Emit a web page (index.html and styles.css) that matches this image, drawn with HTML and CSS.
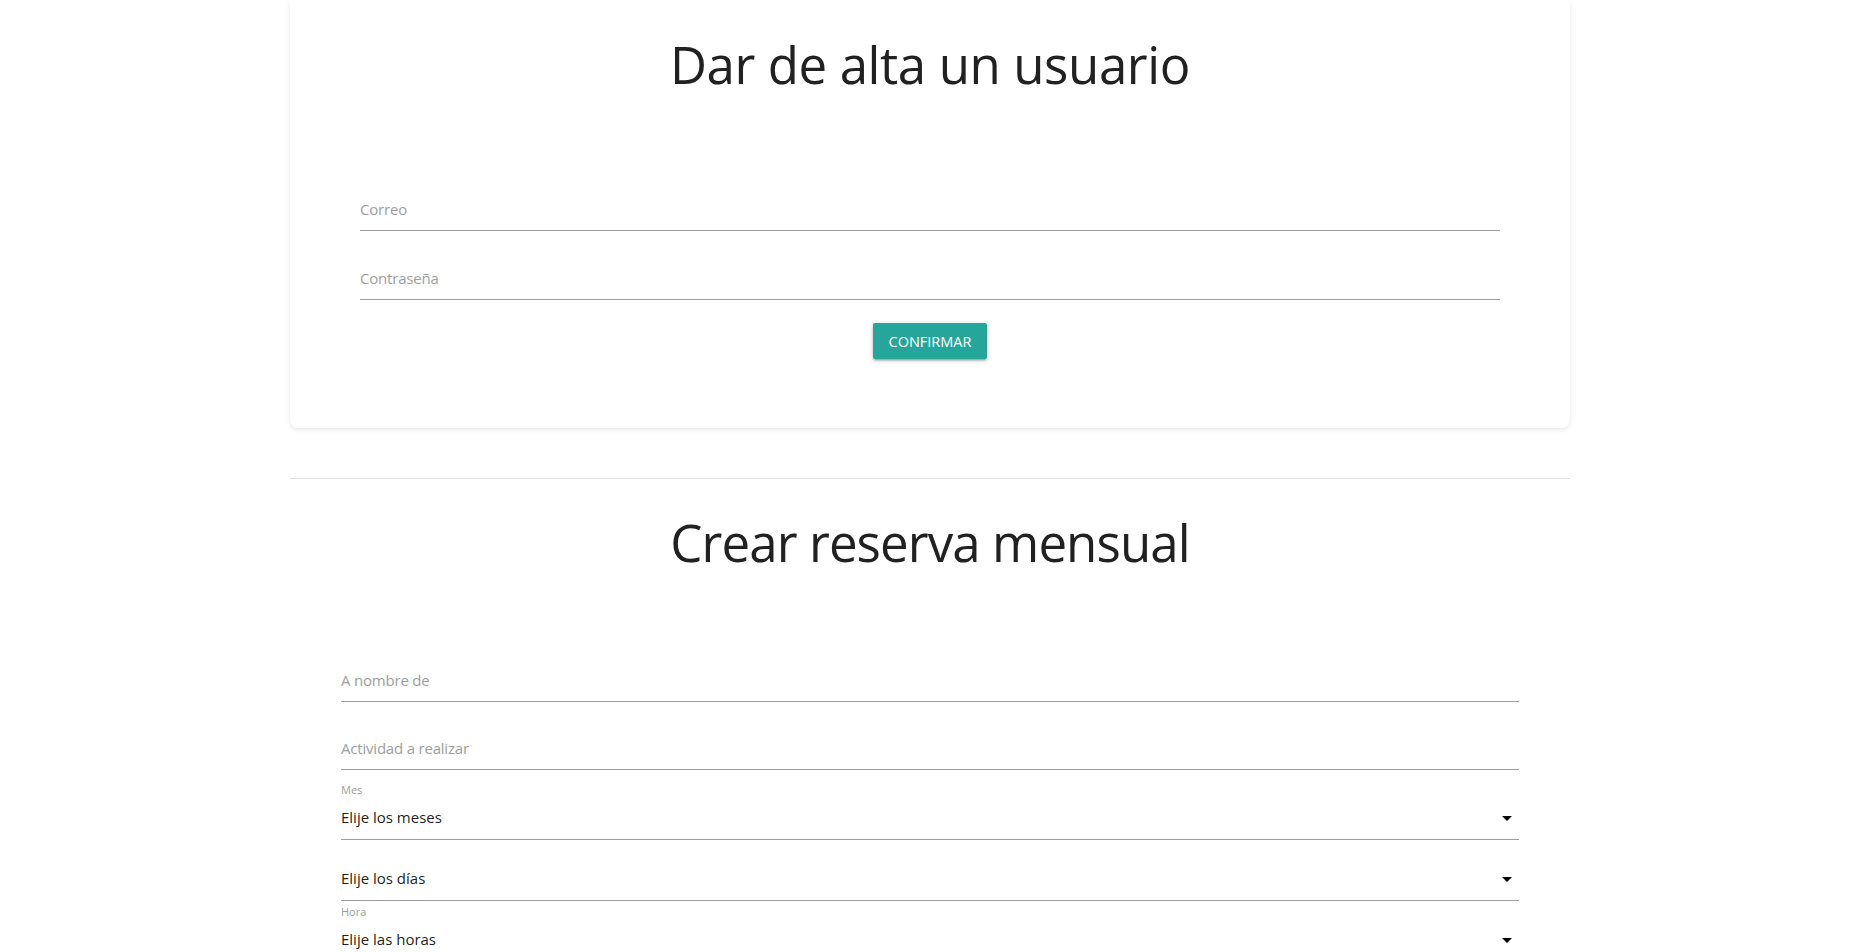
FILE: index.html
```html
<!DOCTYPE html>
<html lang="es">
<head>
<meta charset="utf-8">
<title>Formulario</title>
<link rel="stylesheet" href="styles.css">
</head>
<body>
<div class="page">
  <section class="card">
    <h3 class="title">Dar de alta un usuario</h3>
    <form class="form form-user">
      <div class="field"><span class="placeholder">Correo</span></div>
      <div class="field field-gap"><span class="placeholder">Contraseña</span></div>
      <div class="actions"><button type="button" class="btn">CONFIRMAR</button></div>
    </form>
  </section>
  <hr class="divider">
  <section class="section">
    <h3 class="title title-2">Crear reserva mensual</h3>
    <form class="form form-reserva">
      <div class="field"><span class="placeholder">A nombre de</span></div>
      <div class="field field-gap2"><span class="placeholder">Actividad a realizar</span></div>
      <div class="small-label">Mes</div>
      <div class="field select"><span class="value">Elije los meses</span><span class="caret"></span></div>
      <div class="field select field-gap3"><span class="value">Elije los días</span><span class="caret"></span></div>
      <div class="small-label small-label-2">Hora</div>
      <div class="field select"><span class="value">Elije las horas</span><span class="caret"></span></div>
    </form>
  </section>
</div>
</body>
</html>
```
FILE: styles.css
```css
* { box-sizing: border-box; }
html, body { margin: 0; padding: 0; background: #fff; }
body {
  font-family: "Open Sans", "Noto Sans", "Liberation Sans", sans-serif;
  color: rgba(0,0,0,0.87);
  overflow: hidden;
  height: 952px;
}
.page {
  width: 1280px;
  margin: 0 auto;
  position: relative;
  left: -1px;
}
.card {
  background: #fff;
  border-radius: 0 0 8px 8px;
  box-shadow: 0 2px 4px rgba(0,0,0,0.06), 0 1px 10px rgba(0,0,0,0.04);
  padding: 29px 70px 69px;
}
.title {
  margin: 0;
  font-weight: 400;
  font-size: 51px;
  line-height: 70px;
  text-align: center;
  color: #212121;
  letter-spacing: -0.4px;
}
.form { display: flex; flex-direction: column; }
.form-user { margin-top: 89px; }
.field {
  height: 43px;
  border-bottom: 1px solid #9e9e9e;
  display: flex;
  align-items: center;
  font-size: 15px;
  position: relative;
}
.field-gap { margin-top: 26px; }
.placeholder { color: #9e9e9e; letter-spacing: -0.2px; }
.actions { display: flex; justify-content: center; margin-top: 23px; }
.btn {
  height: 36px;
  width: 114px;
  border: none;
  border-radius: 2px;
  background: #26a69a;
  color: #fff;
  font-family: inherit;
  font-size: 14.5px;
  letter-spacing: 0;
  box-shadow: 0 2px 2px rgba(0,0,0,0.14), 0 3px 1px -2px rgba(0,0,0,0.12), 0 1px 5px rgba(0,0,0,0.2);
  padding: 0;
}
.divider {
  border: none;
  border-top: 1px solid #e0e0e0;
  margin: 50px 0 0;
  height: 0;
}
.section { padding: 28px 51px 0; }
.title-2 { letter-spacing: -0.9px; }
.form-reserva { margin-top: 82px; }
.field-gap2 { margin-top: 25px; }
.small-label {
  font-size: 11px;
  color: #9e9e9e;
  height: 27px;
  line-height: 14px;
  padding-top: 13px;
}
.select .value { color: rgba(0,0,0,0.9); position: relative; top: -1px; }
.field-gap3 { margin-top: 18px; }
.small-label-2 { height: 18px; padding-top: 4px; }
.caret {
  position: absolute;
  right: 7px;
  top: 19px;
  width: 0; height: 0;
  border-left: 5px solid transparent;
  border-right: 5px solid transparent;
  border-top: 5px solid #000;
}
```
